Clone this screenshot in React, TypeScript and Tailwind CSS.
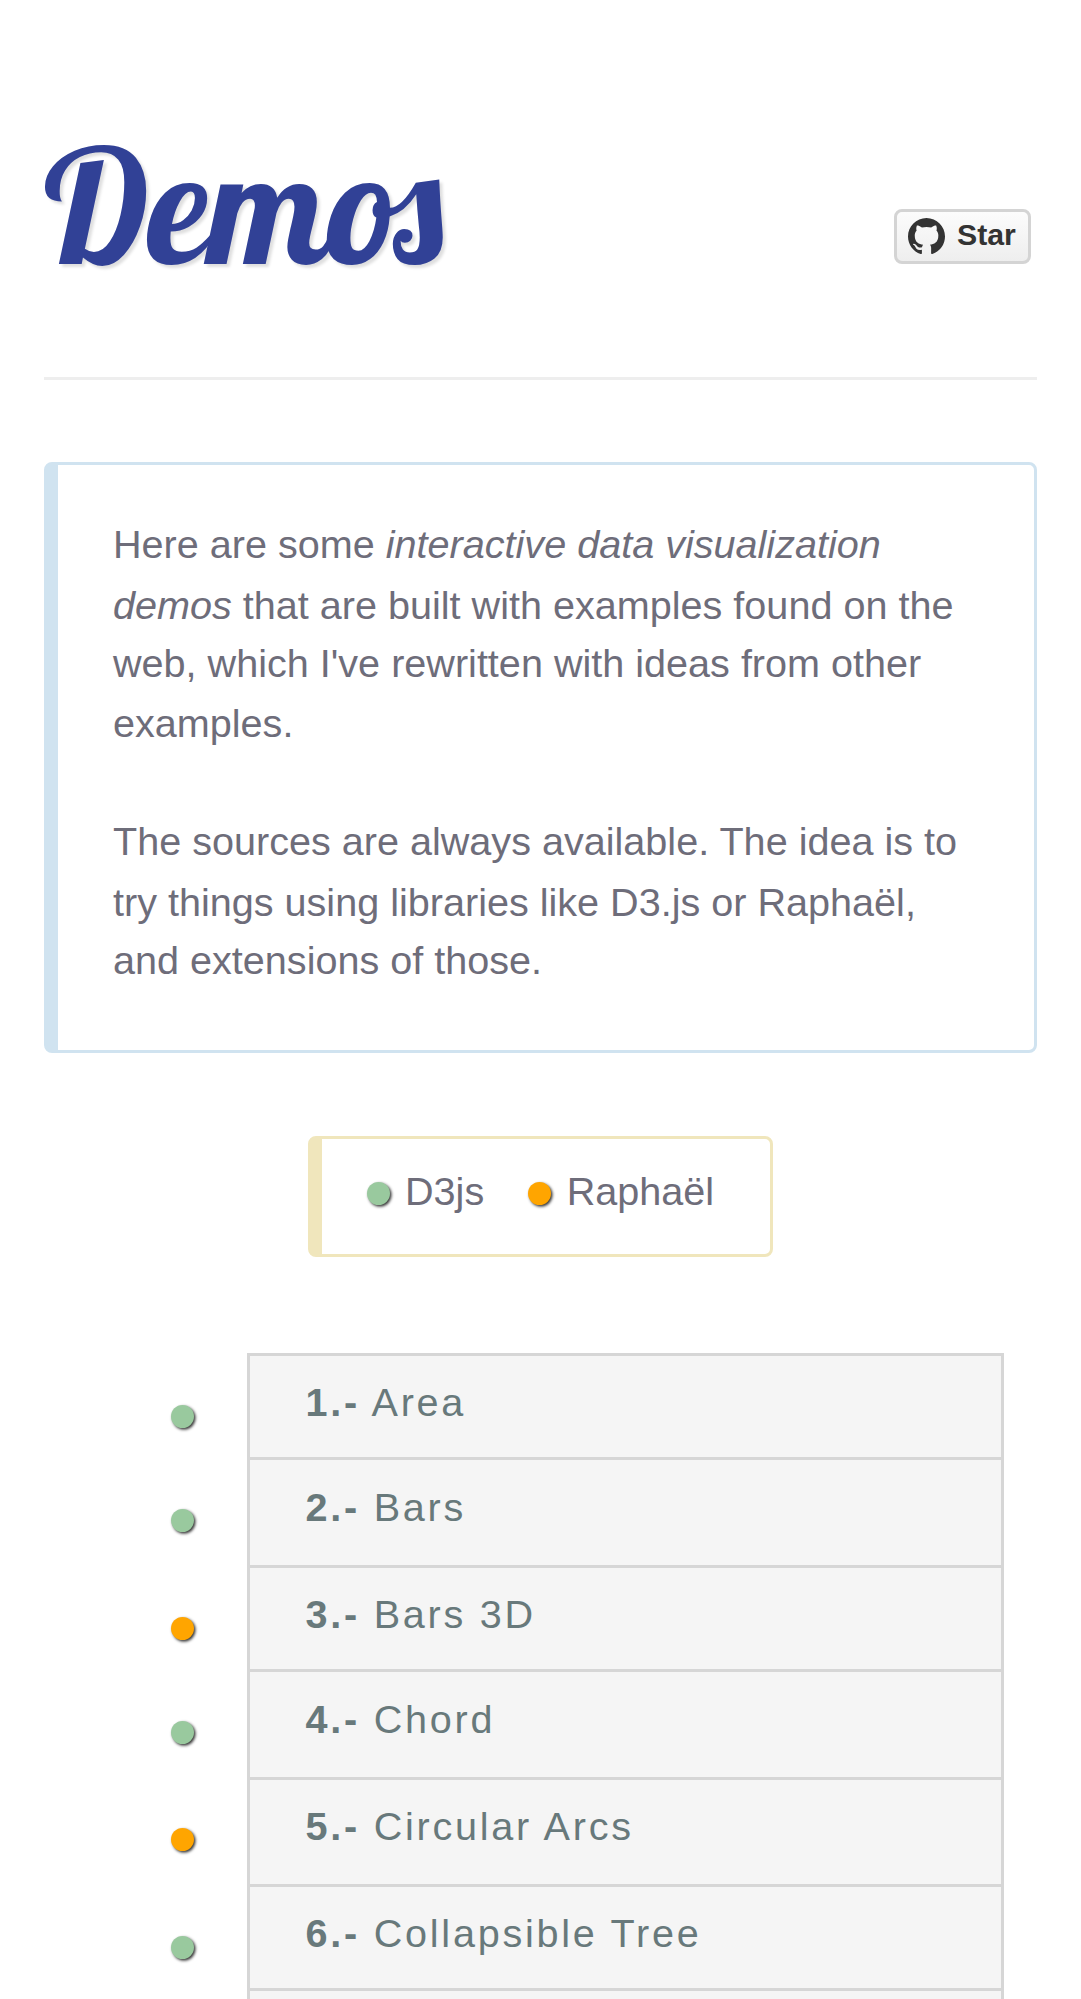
type Library = 'd3' | 'raphael';

const demos: { name: string; library: Library; row: string; dot: string; text: string }[] = [
  { name: 'Area', library: 'd3', row: 'h-[104px]', dot: 'pt-[52px]', text: 'pt-[17px]' },
  { name: 'Bars', library: 'd3', row: 'h-[108px]', dot: 'pt-[52px]', text: 'pt-[18px]' },
  { name: 'Bars 3D', library: 'raphael', row: 'h-[104px]', dot: 'pt-[52px]', text: 'pt-[17px]' },
  { name: 'Chord', library: 'd3', row: 'h-[108px]', dot: 'pt-[52px]', text: 'pt-[18px]' },
  { name: 'Circular Arcs', library: 'raphael', row: 'h-[107px]', dot: 'pt-[51px]', text: 'pt-[17px]' },
  { name: 'Collapsible Tree', library: 'd3', row: 'h-[104px]', dot: 'pt-[52px]', text: 'pt-[17px]' },
];

function Dot({ library }: { library: Library }) {
  return (
    <span
      className={`block size-[22.5px] shrink-0 rounded-full shadow-[1.5px_1.5px_3px_rgba(0,0,0,0.8)] ${
        library === 'd3' ? 'bg-[#99c99e]' : 'bg-[#ffa500]'
      }`}
    />
  );
}

function GithubMark() {
  return (
    <svg viewBox="0 0 16 16" className="size-[37px]" fill="#333333" aria-hidden="true">
      <path d="M8 0C3.58 0 0 3.58 0 8c0 3.54 2.29 6.53 5.47 7.59.4.07.55-.17.55-.38 0-.19-.01-.82-.01-1.49-2.01.37-2.53-.49-2.69-.94-.09-.23-.48-.94-.82-1.13-.28-.15-.68-.52-.01-.53.63-.01 1.08.58 1.23.82.72 1.21 1.87.87 2.33.66.07-.52.28-.87.51-1.07-1.78-.2-3.64-.89-3.64-3.95 0-.87.31-1.59.82-2.15-.08-.2-.36-1.02.08-2.12 0 0 .67-.21 2.2.82.64-.18 1.32-.27 2-.27s1.36.09 2 .27c1.53-1.04 2.2-.82 2.2-.82.44 1.1.16 1.92.08 2.12.51.56.82 1.27.82 2.15 0 3.07-1.87 3.75-3.65 3.95.29.25.54.73.54 1.48 0 1.07-.01 1.93-.01 2.2 0 .21.15.46.55.38A8.01 8.01 0 0 0 16 8c0-4.42-3.58-8-8-8z" />
    </svg>
  );
}

export default function App() {
  return (
    <div className="h-[1999px] overflow-hidden bg-white px-11 font-['Liberation_Sans',Arial,sans-serif] text-[39.6px] leading-[59.4px] text-[#6e6d7a]">
      <header className="flex h-[380px] items-start justify-between border-b-3 border-[#eeeeee]">
        <h1 className="mt-[115px] font-['Lobster',cursive] text-[158.4px] leading-[180px] font-normal text-[#314196] [text-shadow:3px_3px_3px_rgba(0,0,0,0.13)]">
          Demos
        </h1>
        <a className="mt-[209px] mr-[6px] flex h-[55px] w-[137px] items-center rounded-[8px] border-[3px] border-[#d4d4d4] bg-linear-to-b from-[#fcfcfc] to-[#eeeeee] pl-[11px] text-[30.25px] leading-none font-bold text-[#333333]">
          <GithubMark />
          <span className="ml-[12px] pb-[2px]">Star</span>
        </a>
      </header>

      <section className="mt-[82px] h-[591px] w-[993px] rounded-[8px] border-[3px] border-l-[14px] border-[#d0e3f0] pt-[50px] pl-[55px]">
        <p>
          <span className="block h-[61px]">Here are some <em>interactive data visualization</em></span>
          <span className="block h-[58px]"><em>demos</em> that are built with examples found on the</span>
          <span className="block h-[60px]">web, which I've rewritten with ideas from other</span>
          <span className="block h-[59px]">examples.</span>
        </p>
        <p className="mt-[59px]">
          <span className="block h-[61px]">The sources are always available. The idea is to</span>
          <span className="block h-[58px]">try things using libraries like D3.js or Raphaël,</span>
          <span className="block h-[59px]">and extensions of those.</span>
        </p>
      </section>

      <section className="mt-[83px] ml-[264px] flex h-[121px] w-[465px] items-start rounded-[8px] border-[3px] border-l-[14px] border-[#f0e6bc] pt-[23px] pl-[45px]">
        <div className="flex items-start">
          <div className="pt-5">
            <Dot library="d3" />
          </div>
          <span className="ml-[15.5px]">D3js</span>
        </div>
        <div className="ml-[44px] flex items-start">
          <div className="pt-5">
            <Dot library="raphael" />
          </div>
          <span className="ml-[16px]">Raphaël</span>
        </div>
      </section>

      <ol className="mt-[96px] ml-[127px]">
        {demos.map((demo, i) => (
          <li key={demo.name} className={`flex ${demo.row}`}>
            <div className={`w-[76px] ${demo.dot}`}>
              <Dot library={demo.library} />
            </div>
            <a
              className={`block w-[757px] border-x-[3px] border-t-[3px] border-[#d6d6d6] bg-[#f5f5f5] pl-[55.5px] tracking-[2.75px] text-[#68797b] ${demo.text}`}
            >
              <b>{i + 1}.-</b> {demo.name}
            </a>
          </li>
        ))}
        <li className="ml-[76px] h-[108px] w-[757px] border-x-[3px] border-t-[3px] border-[#d6d6d6] bg-[#f5f5f5]" />
      </ol>
    </div>
  );
}
